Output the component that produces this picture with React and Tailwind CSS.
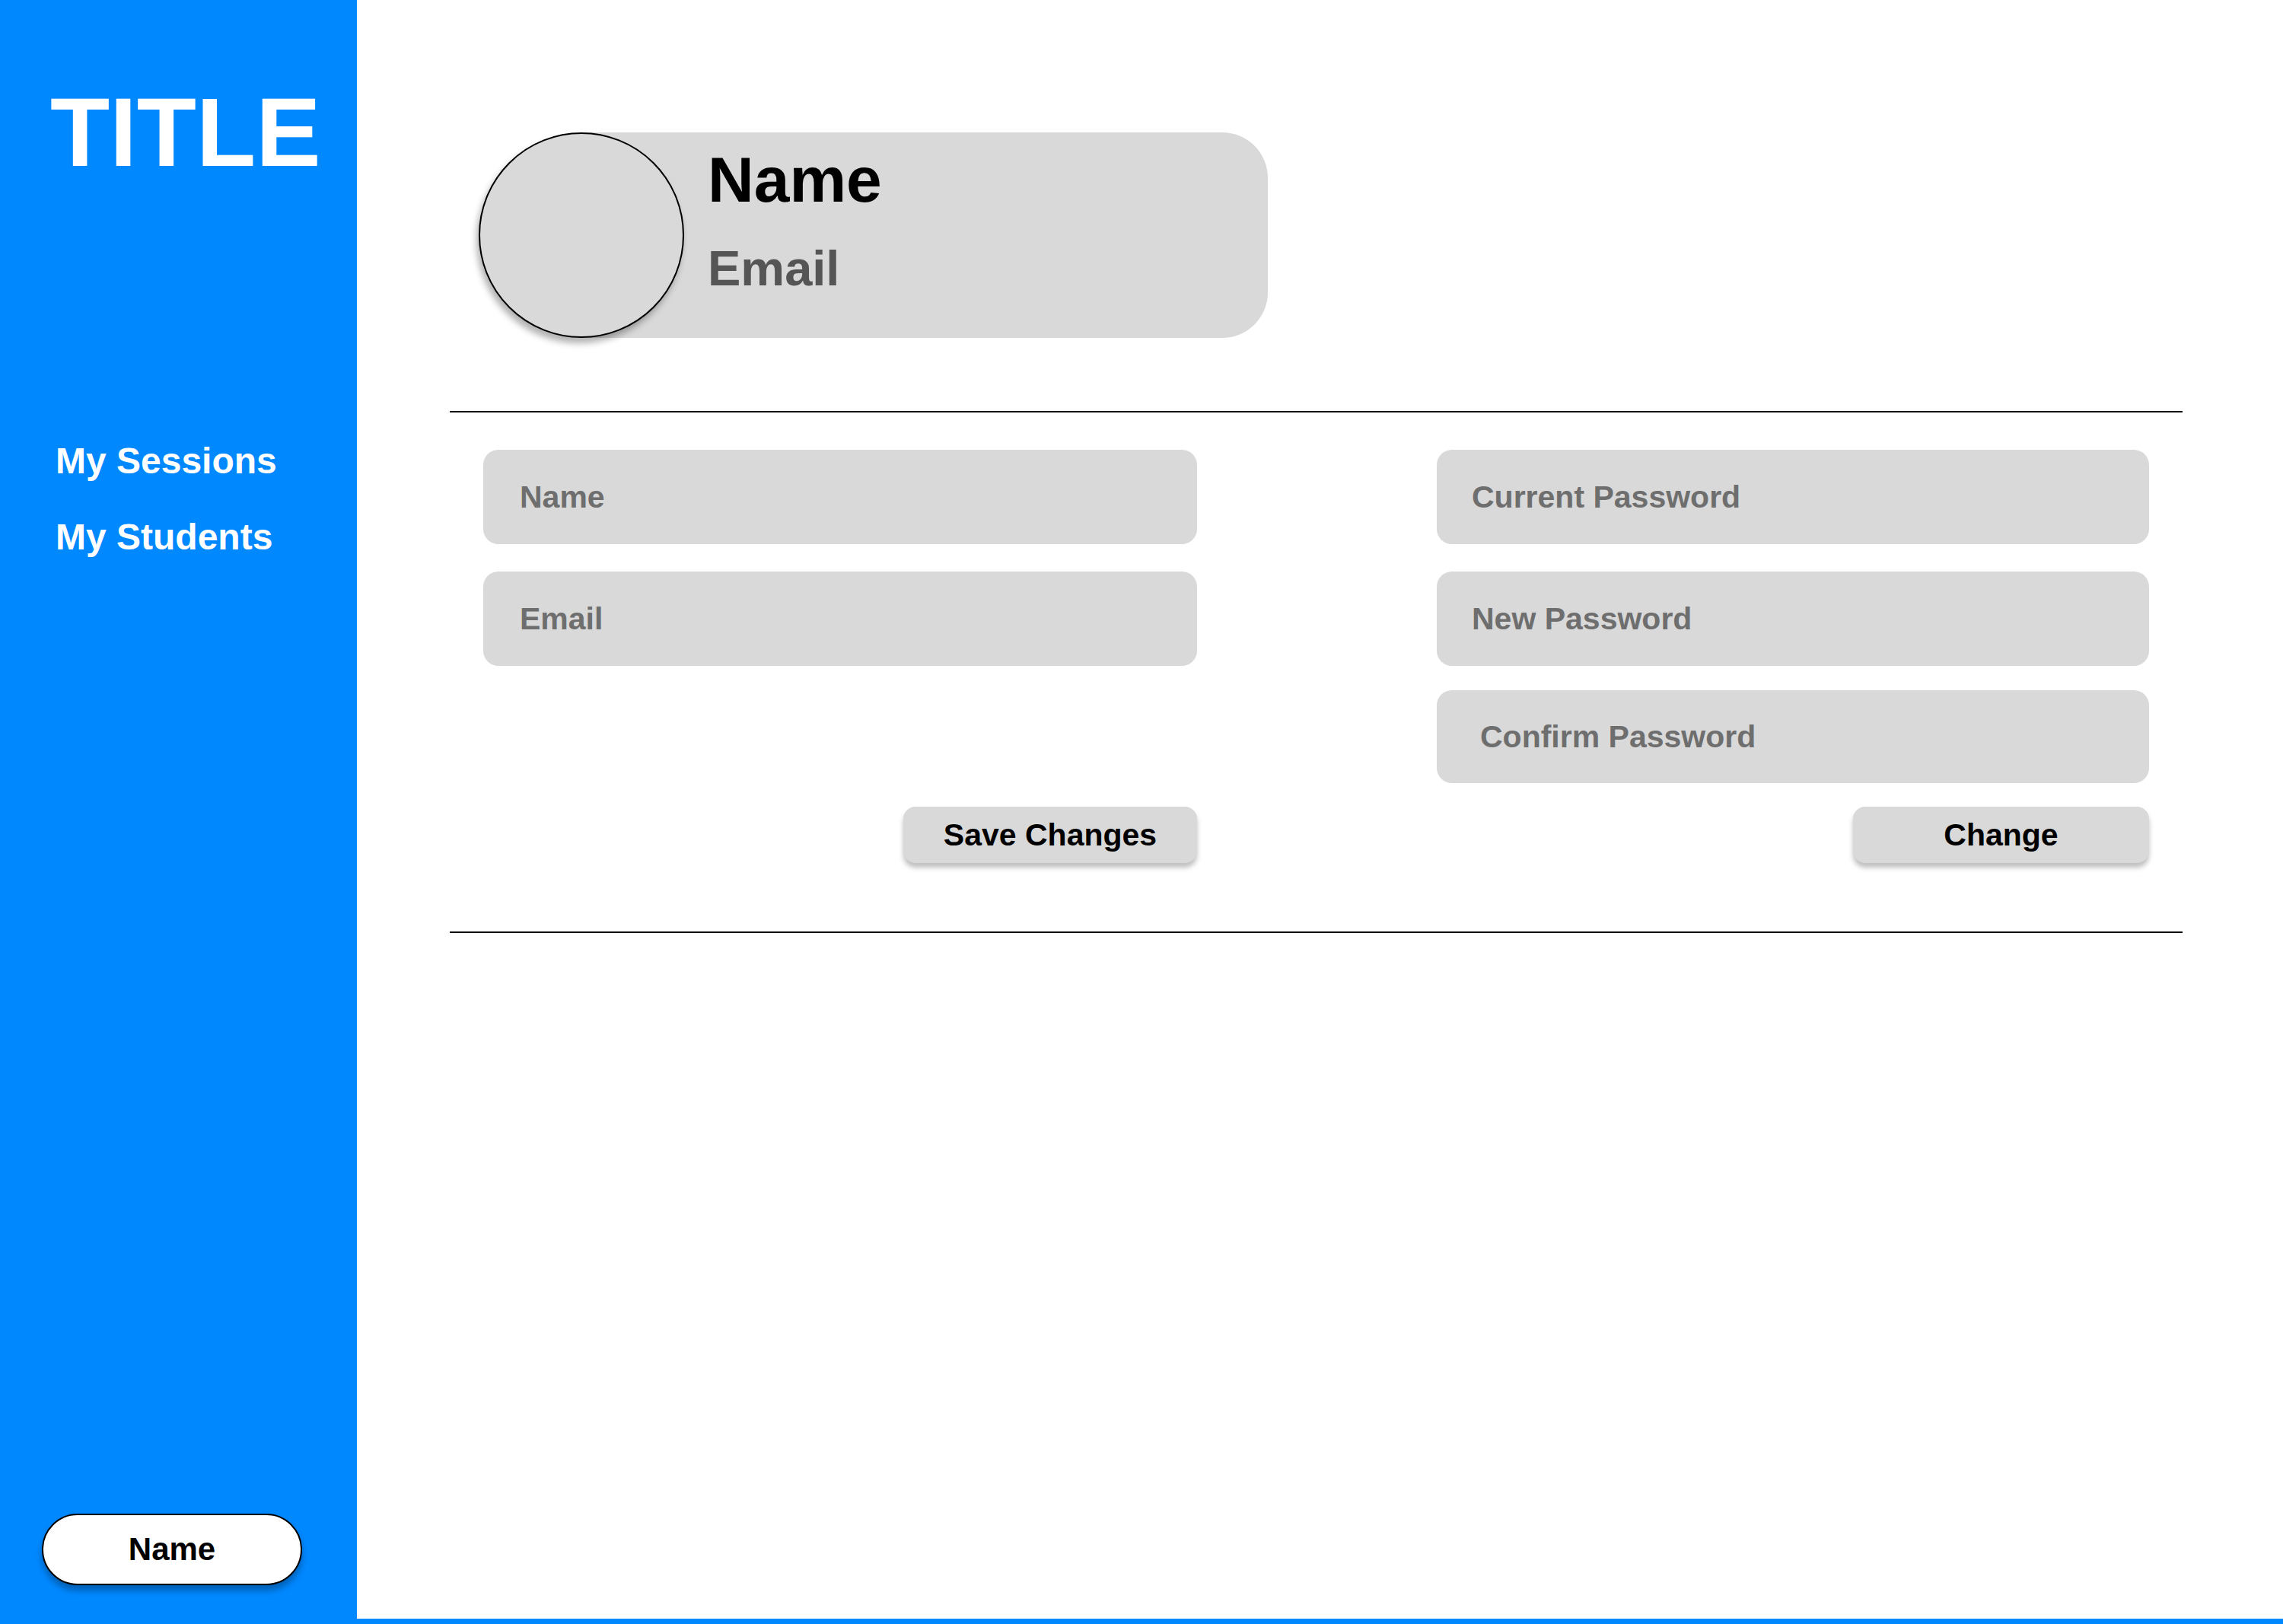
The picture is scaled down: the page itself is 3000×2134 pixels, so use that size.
export default function App() {
  const font = { fontFamily: '"Liberation Sans", Arial, sans-serif' };
  return (
    <div className="w-[3000px] h-[2134px] bg-[#0088ff] overflow-hidden" style={font}>
      <div className="flex h-[2127px]">
        {/* Sidebar */}
        <aside className="w-[469px] shrink-0 bg-[#0088ff] flex flex-col">
          <div className="pt-[110px] pl-[66px] text-white font-bold text-[128px] leading-none">TITLE</div>
          <nav className="mt-[344px] pl-[73px] flex flex-col gap-[52px]">
            <a className="text-white font-bold text-[48px] leading-none">My Sessions</a>
            <a className="text-white font-bold text-[48px] leading-none">My Students</a>
          </nav>
          <div className="mt-auto mb-[44px] ml-[55px] w-[342px] h-[94px] rounded-full border-2 border-black bg-white flex items-center justify-center shadow-[0_7px_8px_rgba(0,0,0,0.3)]">
            <span className="text-black font-bold text-[42px] leading-none">Name</span>
          </div>
        </aside>

        {/* Main */}
        <main className="flex-1 bg-white">
          {/* Profile card */}
          <div className="mt-[174px] ml-[160px] flex">
            <div className="relative z-10 w-[270px] h-[270px] shrink-0 rounded-full border-2 border-black bg-[#d9d9d9] shadow-[-3px_7px_8px_rgba(0,0,0,0.3)]" />
            <div className="-ml-[135px] w-[902px] h-[270px] bg-[#d9d9d9] rounded-r-[60px] pl-[166px] pt-[20px] flex flex-col">
              <div className="text-black font-bold text-[84px] leading-none">Name</div>
              <div className="mt-[42px] text-[#555555] font-bold text-[65px] leading-none">Email</div>
            </div>
          </div>

          {/* Divider */}
          <div className="mt-[96px] ml-[122px] w-[2277px] h-[2px] bg-black" />

          {/* Forms */}
          <div className="ml-[166px] mt-[49px] flex">
            <div className="w-[938px] flex flex-col">
              <div className="h-[124px] rounded-[20px] bg-[#d9d9d9] flex items-center pl-[48px]">
                <span className="text-[#6e6e6e] font-bold text-[41px] leading-none">Name</span>
              </div>
              <div className="mt-[36px] h-[124px] rounded-[20px] bg-[#d9d9d9] flex items-center pl-[48px]">
                <span className="text-[#6e6e6e] font-bold text-[41px] leading-none">Email</span>
              </div>
              <div className="flex-1" />
              <div className="self-end w-[386px] h-[74px] rounded-[16px] bg-[#d9d9d9] flex items-center justify-center shadow-[0_6px_6px_rgba(0,0,0,0.25)]">
                <span className="text-black font-bold text-[41px] leading-none">Save Changes</span>
              </div>
            </div>
            <div className="ml-[315px] w-[936px] flex flex-col">
              <div className="h-[124px] rounded-[20px] bg-[#d9d9d9] flex items-center pl-[46px]">
                <span className="text-[#6e6e6e] font-bold text-[41px] leading-none">Current Password</span>
              </div>
              <div className="mt-[36px] h-[124px] rounded-[20px] bg-[#d9d9d9] flex items-center pl-[46px]">
                <span className="text-[#6e6e6e] font-bold text-[41px] leading-none">New Password</span>
              </div>
              <div className="mt-[32px] h-[122px] rounded-[20px] bg-[#d9d9d9] flex items-center pl-[57px]">
                <span className="text-[#6e6e6e] font-bold text-[41px] leading-none">Confirm Password</span>
              </div>
              <div className="mt-[31px] self-end w-[389px] h-[74px] rounded-[16px] bg-[#d9d9d9] flex items-center justify-center shadow-[0_6px_6px_rgba(0,0,0,0.25)]">
                <span className="text-black font-bold text-[41px] leading-none">Change</span>
              </div>
            </div>
          </div>

          {/* Divider */}
          <div className="mt-[90px] ml-[122px] w-[2277px] h-[2px] bg-black" />
        </main>
      </div>
    </div>
  );
}
